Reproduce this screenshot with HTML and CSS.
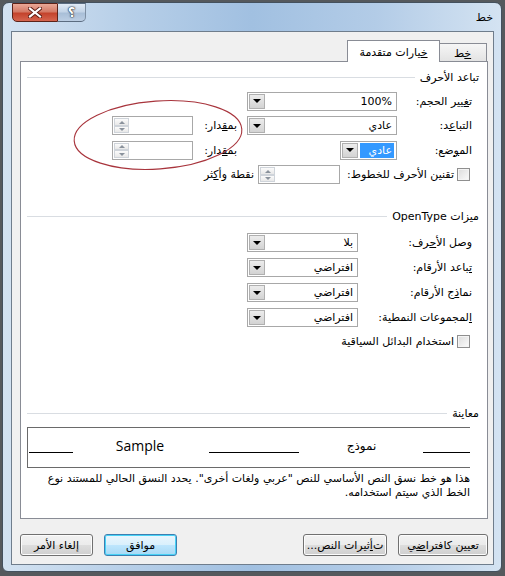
FILE: index.html
```html
<!DOCTYPE html>
<html lang="ar" dir="rtl">
<head>
  <meta charset="UTF-8">
  <title>خط</title>
  <link rel="stylesheet" href="styles.css">
</head>
<body>

<div class="window">
  <div class="titlebar">
    <span class="title">خط</span>
    <div class="caption">
      <span class="cap-btn help">؟</span>
      <span class="cap-btn close">
        <svg width="14" height="11" viewBox="0 0 14 11">
          <path d="M2 1.5 L12 9.5 M12 1.5 L2 9.5" stroke="#5a1a12" stroke-width="4" stroke-linecap="square"/>
          <path d="M2 1.5 L12 9.5 M12 1.5 L2 9.5" stroke="#fff" stroke-width="2.2" stroke-linecap="square"/>
        </svg>
      </span>
    </div>
  </div>

  <div class="client">
    <div class="tabs">
      <span class="tab"><u>خ&zwj;</u>&zwj;ط</span>
      <span class="tab active"><u>خ&zwj;</u>&zwj;يارات متقدمة</span>
    </div>

    <div class="panel">
      <div class="group-title"><span>تباعد الأحرف</span><i></i></div>
      <div class="rows">
        <div class="row">
          <span class="lbl">ت&zwj;<u>&zwj;غ&zwj;</u>&zwj;يير الحجم:</span>
          <div class="combo wide"><span class="val">100%</span><span class="drop"></span></div>
        </div>
        <div class="row">
          <span class="lbl">التبا<u>ع&zwj;</u>&zwj;د:</span>
          <div class="combo wide"><span class="val">عادي</span><span class="drop"></span></div>
          <span class="lbl2">بم&zwj;<u>&zwj;ق&zwj;</u>&zwj;دار:</span>
          <div class="spin"><span class="arrows"><b class="up"></b><b class="down"></b></span></div>
        </div>
        <div class="row">
          <span class="lbl">الم&zwj;<u>&zwj;و</u>ضع:</span>
          <div class="combo-cell">
            <div class="combo short"><span class="val sel">عادي</span><span class="drop"></span></div>
          </div>
          <span class="lbl2">بم&zwj;<u>&zwj;ق&zwj;</u>&zwj;دار:</span>
          <div class="spin"><span class="arrows"><b class="up"></b><b class="down"></b></span></div>
        </div>
        <div class="row check-row">
          <span class="check"></span>
          <span class="check-text">تقنين الأحرف للخطوط:</span>
          <div class="spin kern"><span class="arrows"><b class="up"></b><b class="down"></b></span></div>
          <span class="unit">نقطة وأ<u>ك&zwj;</u>&zwj;ثر</span>
        </div>
      </div>

      <div class="group-title second"><span>ميزات OpenType</span><i></i></div>
      <div class="rows ot">
        <div class="row">
          <span class="lbl">وصل الأ<u>ح&zwj;</u>&zwj;رف:</span>
          <div class="combo"><span class="val">بلا</span><span class="drop"></span></div>
        </div>
        <div class="row">
          <span class="lbl"><u>ت&zwj;</u>&zwj;باعد الأرقام:</span>
          <div class="combo"><span class="val">افتراضي</span><span class="drop"></span></div>
        </div>
        <div class="row">
          <span class="lbl">نما<u>ذ</u>ج الأرقام:</span>
          <div class="combo"><span class="val">افتراضي</span><span class="drop"></span></div>
        </div>
        <div class="row">
          <span class="lbl"><u>ا</u>لمجموعات النمطية:</span>
          <div class="combo"><span class="val">افتراضي</span><span class="drop"></span></div>
        </div>
      </div>
      <div class="row check-row alt">
        <span class="check"></span>
        <span class="check-text">استخدام البدائل السياق&zwj;<u>&zwj;ي&zwj;</u>&zwj;ة</span>
      </div>

      <div class="group-title third"><span>معاينة</span><i></i></div>
      <div class="preview">
        <span class="line l1"></span>
        <span class="sample">Sample</span>
        <span class="line l2"></span>
        <span class="sample ar">نموذج</span>
        <span class="line l3"></span>
      </div>
      <p class="desc">هذا هو خط نسق النص الأساسي للنص "عربي ولغات أخرى". يحدد النسق الحالي للمستند نوع<br>الخط الذي سيتم استخدامه.</p>
    </div>

    <div class="buttons">
      <span class="btn b-default">تعيين كافترا<u>ض&zwj;</u>&zwj;ي</span>
      <span class="btn b-effects">ت<u>أ</u>ثيرات النص...</span>
      <span class="btn b-ok">موافق</span>
      <span class="btn b-cancel">إلغاء الأمر</span>
    </div>
  </div>
</div>

<svg class="mark" width="184" height="84" viewBox="0 0 184 84">
  <ellipse cx="90" cy="41" rx="84" ry="34" fill="none" stroke="#a8343c" stroke-width="1.1" transform="rotate(-4 90 41)"/>
</svg>

</body>
</html>
```

FILE: styles.css
```css
* {
  box-sizing: border-box;
}
html, body {
  margin: 0;
}
body {
  width: 505px;
  height: 576px;
  overflow: hidden;
  position: relative;
  background: #55595d;
  font-family: "DejaVu Sans", sans-serif;
  font-size: 11px;
  color: #000;
}
u {
  text-decoration: underline;
}

/* window frame */
.window {
  width: 500px;
  height: 570px;
  margin: 2px 3px 0 2px;
  border: 1px solid #44515e;
  border-radius: 7px 7px 6px 6px;
  padding: 0 7px 6px 8px;
  background: linear-gradient(90deg, #d3e2f1 0%, #b7cfe8 25%, #a1c0e1 50%, #b3cce7 75%, #d4e3f2 100%);
}
.titlebar {
  height: 28px;
  display: flex;
  align-items: flex-start;
}
.title {
  margin: 8px 1px 0 0;
  line-height: 14px;
}
.caption {
  display: flex;
  margin-right: auto;
  margin-left: 1px;
}
.cap-btn {
  height: 19px;
  display: flex;
  align-items: center;
  justify-content: center;
}
.close {
  width: 46px;
  border: 1px solid #5c2218;
  border-radius: 0 0 0 5px;
  background: linear-gradient(#e9a897 0%, #d47a66 45%, #c4432c 55%, #d5654f 100%);
}
.help {
  width: 28px;
  border: 1px solid #5b6c80;
  border-right-color: #7d8fa3;
  border-left: none;
  border-radius: 0 0 5px 0;
  background: linear-gradient(#e1ebf6 0%, #c3d4e7 45%, #a9bfd8 55%, #bccee3 100%);
  color: #fff;
  font-weight: bold;
  font-size: 13px;
  text-shadow: 0 0 1px #26313d, 0 0 1px #26313d, 0 0 2px #26313d;
}

/* client area */
.client {
  height: 534px;
  background: #f0f0f0;
  border: 1px solid #6f7d8c;
  padding: 8px 5px 0 8px;
}
.tabs {
  height: 21px;
  display: flex;
  align-items: flex-end;
  position: relative;
  z-index: 1;
}
.tab {
  height: 18px;
  width: 49px;
  margin-right: 1px;
  border: 1px solid #898c95;
  border-bottom: none;
  background: linear-gradient(#f6f6f6, #e3e3e3);
  display: flex;
  align-items: center;
  justify-content: center;
  padding-top: 1px;
}
.tab.active {
  width: 93px;
  height: 22px;
  margin-right: -2px;
  margin-bottom: -1px;
  background: #fff;
}
.panel {
  height: 458px;
  background: #fff;
  border: 1px solid #898c95;
  padding: 0 8px 0 6px;
}

/* group headings */
.group-title {
  height: 14px;
  margin-top: 8px;
  display: flex;
  align-items: center;
}
.group-title i {
  flex: 1;
  height: 1px;
  margin-right: 5px;
  background: #d9dde2;
}
.group-title.second {
  margin-top: 22px;
}
.group-title.third {
  margin-top: 54px;
}

/* form rows */
.rows {
  margin-top: 5px;
}
.rows.ot {
  margin-top: 7px;
}
.row {
  height: 24.5px;
  display: flex;
  align-items: center;
  padding-right: 7px;
}
.rows.ot .row {
  height: 25px;
}
.lbl {
  width: 75px;
  flex: none;
}
.rows.ot .lbl {
  width: 114px;
}
.combo {
  height: 19px;
  width: 111px;
  border: 1px solid #a8a8a8;
  background: #fff;
  display: flex;
  align-items: center;
  padding: 0 4px 0 1px;
}
.combo.wide {
  width: 150px;
}
.combo-cell {
  width: 150px;
}
.combo.short {
  width: 57px;
  padding-right: 2px;
}
.val {
  flex: 1;
  line-height: 15px;
}
.val.sel {
  background: #3399ff;
  color: #fff;
  padding-right: 2px;
  margin-left: 2px;
}
.drop {
  width: 16px;
  height: 15px;
  border: 1px solid #b0b0b0;
  background: linear-gradient(#ececec, #d3d3d3);
  display: flex;
  align-items: center;
  justify-content: center;
}
.drop::after {
  content: "";
  border-top: 4px solid #000;
  border-left: 4px solid transparent;
  border-right: 4px solid transparent;
}
.lbl2 {
  width: 44px;
  margin-right: 10px;
}
.spin {
  width: 81px;
  height: 19px;
  border: 1px solid #a8a8a8;
  background: #fff;
  display: flex;
  justify-content: flex-end;
  padding: 1px;
}
.arrows {
  width: 15px;
  display: flex;
  flex-direction: column;
}
.arrows b {
  flex: 1;
  border: 1px solid #cfd4da;
  background: linear-gradient(#fbfbfb, #e8e8e8);
  display: flex;
  align-items: center;
  justify-content: center;
}
.arrows b::after {
  content: "";
  border-left: 3px solid transparent;
  border-right: 3px solid transparent;
}
.arrows .up::after {
  border-bottom: 3px solid #8a929c;
}
.arrows .down::after {
  border-top: 3px solid #8a929c;
}

/* checkboxes */
.check-row {
  padding-right: 9px;
}
.check-row.alt {
  height: 22px;
}
.check {
  width: 13px;
  height: 13px;
  border: 1px solid #8f8f8f;
  background: linear-gradient(135deg, #dcdcdc, #fbfbfb);
  box-shadow: inset 0 0 0 1px #f4f4f4;
  flex: none;
}
.check-text {
  margin-right: 3px;
}
.check-row .check-text:not(:last-child) {
  width: 114px;
}
.spin.kern {
  width: 82px;
}
.unit {
  margin-right: 4px;
}

/* preview */
.preview {
  height: 41px;
  margin-top: 7px;
  margin-right: 9px;
  border-top: 1px solid #6a6a6a;
  border-bottom: 1px solid #6a6a6a;
  border-left: 1px solid #6a6a6a;
  direction: ltr;
  display: flex;
  align-items: flex-end;
  padding: 0 0 13px 1px;
}
.line {
  height: 1px;
  background: #000;
  margin-bottom: 1px;
}
.l1 { width: 44px; }
.l2 { width: 90px; margin-left: 45px; }
.l3 { width: 47px; margin-left: 47px; }
.sample {
  font-family: "Open Sans", sans-serif;
  font-size: 14px;
  line-height: 16px;
  margin-left: 43px;
}
.sample.ar {
  font-family: "DejaVu Sans", sans-serif;
  font-size: 12px;
  margin-left: 48px;
}
.desc {
  margin: 4px 9px 0 0;
  line-height: 14px;
}

/* buttons */
.buttons {
  display: flex;
  margin-top: 15px;
  height: 22px;
}
.btn {
  height: 22px;
  border: 1px solid #707070;
  border-radius: 3px;
  background: linear-gradient(#f2f2f2 0%, #ebebeb 50%, #dddddd 50%, #cfcfcf 100%);
  box-shadow: inset 0 0 0 1px #fcfcfc;
  display: flex;
  align-items: center;
  justify-content: center;
}
.b-default { width: 90px; }
.b-effects { width: 84px; margin-right: 11px; }
.b-ok {
  width: 73px;
  margin-right: auto;
  border-color: #3c7fb1;
  box-shadow: inset 0 0 0 1px #48d2f6;
  background: linear-gradient(#eaf6fd 0%, #d9f0fc 50%, #bee6fd 50%, #a7d9f5 100%);
}
.b-cancel { width: 73px; margin-right: 11px; }

/* hand-drawn annotation over the dialog */
.mark {
  position: absolute;
  left: 68px;
  top: 94px;
}
```
